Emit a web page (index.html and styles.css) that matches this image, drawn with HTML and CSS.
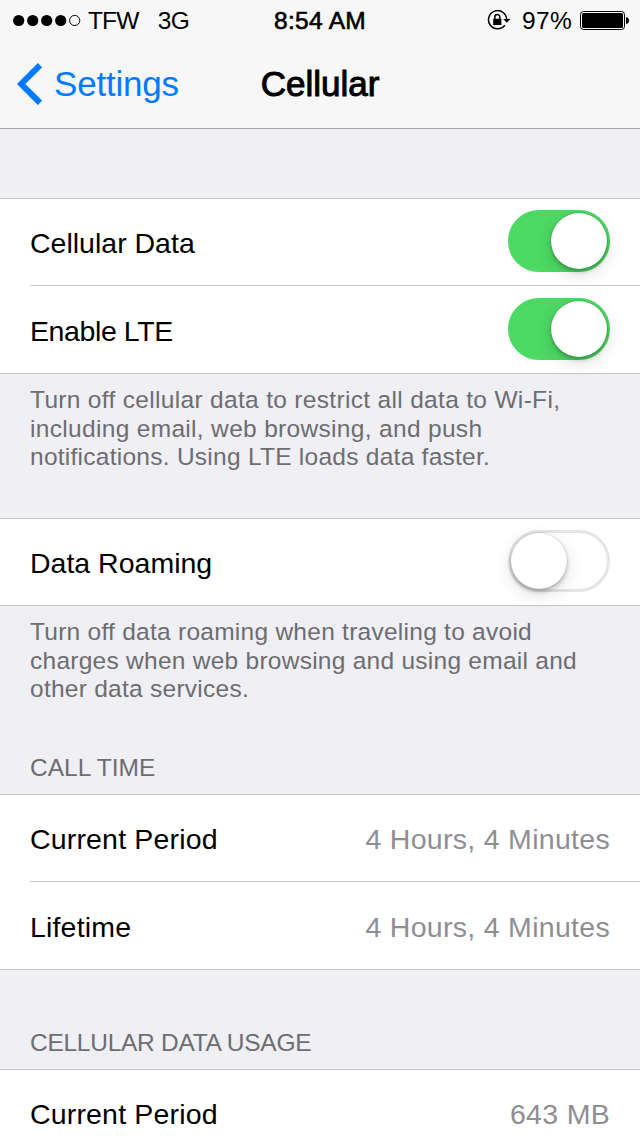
FILE: index.html
```html
<!DOCTYPE html>
<html lang="en">
<head>
<meta charset="utf-8">
<title>Cellular</title>
<link rel="stylesheet" href="styles.css">
</head>
<body>
<header class="top">
  <div class="status">
    <div class="status-left">
      <svg class="signal" width="68" height="14" viewBox="0 0 68 14"><circle cx="5.7" cy="7.5" r="5.6"/><circle cx="19.7" cy="7.5" r="5.6"/><circle cx="33.7" cy="7.5" r="5.6"/><circle cx="47.7" cy="7.5" r="5.6"/><circle cx="61.7" cy="7.5" r="5.1" fill="none" stroke="#000"/></svg>
      <span class="carrier">TFW</span><span class="network">3G</span>
    </div>
    <div class="time">8:54 AM</div>
    <div class="status-right">
      <svg class="lock" width="24" height="20" viewBox="0 0 24 20"><path d="M17.800 15.300A9.100 9.100 0 1 1 19.700 9.500" fill="none" stroke="#000" stroke-width="1.500"/><path d="M16.200 9H23.400L19.800 12.800Z"/><path d="M6.200 8.800h8.200v6.200H6.200z"/><path d="M7.800 9.500V7a2.500 2.500 0 0 1 5 0v2.500" fill="none" stroke="#000" stroke-width="1.500"/></svg>
      <span class="percent">97%</span>
      <svg class="battery" width="49" height="20" viewBox="0 0 49 20"><rect x=".5" y="1.500" width="44" height="18" rx="3" fill="none" stroke="#000"/><rect x="2" y="3" width="41" height="15" rx="1.500"/><path d="M46 7c2 .3 3 1.500 3 3.500s-1 3.200-3 3.500z"/></svg>
    </div>
  </div>
  <nav class="nav">
    <a class="back"><svg width="26" height="42" viewBox="0 0 26 42"><path d="M24 2.200 5.200 21 24 39.800" fill="none" stroke="#007aff" stroke-width="6"/></svg><span>Settings</span></a>
    <h1 class="title">Cellular</h1>
  </nav>
</header>
<main>
  <section class="group first">
    <div class="row"><span class="label l-data">Cellular Data</span><span class="switch on"><i></i></span></div>
    <div class="row"><span class="label l-lte">Enable LTE</span><span class="switch on"><i></i></span></div>
  </section>
  <p class="note note-data"><span class="wide">Turn off cellular data to restrict all data to Wi-Fi,</span><span class="wide">including email, web browsing, and push</span><span>notifications. Using LTE loads data faster.</span></p>
  <section class="group single">
    <div class="row"><span class="label">Data Roaming</span><span class="switch"><i></i></span></div>
  </section>
  <p class="note note-roam"><span>Turn off data roaming when traveling to avoid</span><span>charges when web browsing and using email and</span><span>other data services.</span></p>
  <h2 class="heading h-call">CALL TIME</h2>
  <section class="group">
    <div class="row"><span class="label l-period">Current Period</span><span class="value">4 Hours, 4 Minutes</span></div>
    <div class="row"><span class="label l-period">Lifetime</span><span class="value">4 Hours, 4 Minutes</span></div>
  </section>
  <h2 class="heading h-usage">CELLULAR DATA USAGE</h2>
  <section class="group">
    <div class="row"><span class="label l-period">Current Period</span><span class="value">643 MB</span></div>
  </section>
</main>
</body>
</html>
```
FILE: styles.css
```css
* { box-sizing: border-box; margin: 0; padding: 0; }
body { width: 640px; height: 1136px; overflow: hidden; background: #efeff4; color: #000; font-family: "Liberation Sans", Arial, sans-serif; font-size: 28.5px; }
svg { display: block; flex: none; }
span, .time, .title { white-space: nowrap; }
.top { height: 129px; background: #f7f7f7; border-bottom: 1px solid #a7a7ab; }
.status { height: 40px; display: grid; grid-template-columns: 1fr auto 1fr; align-items: center; font-size: 24.5px; line-height: 40px; padding: 0 11px 0 13px; }
.status-left, .status-right { display: flex; align-items: center; }
.status-right { justify-content: flex-end; }
.carrier, .network, .time, .percent { padding-top: 2px; line-height: 38px; }
.carrier { margin-left: 7px; letter-spacing: -.9px; }
.network { margin-left: 19.5px; letter-spacing: -.8px; }
.percent { margin: 0 8px 0 11px; letter-spacing: .3px; }
.time { -webkit-text-stroke: .6px #000; letter-spacing: .3px; padding-right: 2px; }
.nav { height: 88px; display: grid; grid-template-columns: 1fr auto 1fr; align-items: center; padding: 0 16px; }
.back { display: flex; align-items: center; gap: 12px; color: #007aff; font-size: 35px; }
.back span { letter-spacing: -.2px; }
.title { font-size: 35px; font-weight: 400; -webkit-text-stroke: 1px #000; }
.group { background: #fff; border-top: 1px solid #c8c7cc; border-bottom: 1px solid #c8c7cc; }
.first { margin-top: 69px; }
.row { margin-left: 30px; padding: 3px 30px 0 0; display: flex; align-items: center; justify-content: space-between; }
.row:first-child { height: 86px; }
.row + .row { height: 88px; border-top: 1px solid #c8c7cc; }
.l-lte { letter-spacing: -.4px; }
.l-period { letter-spacing: .17px; }
.value { color: #8e8e93; letter-spacing: .3px; }
.switch { width: 102px; height: 62px; border-radius: 31px; border: 3px solid #e5e5e5; display: flex; margin-top: -5px; }
.switch i { width: 56px; height: 56px; border-radius: 50%; background: #fff; box-shadow: 0 6px 18px rgba(0,0,0,.13), 0 3px 4px rgba(0,0,0,.2), 0 0 2px rgba(0,0,0,.25); }
.switch.on { background: #4cd964; border-color: #4cd964; justify-content: flex-end; }
.note { padding: 12px 30px 0; color: #6d6d72; font-size: 24.5px; line-height: 28.7px; letter-spacing: .26px; }
.note span { display: block; }
.note .wide { letter-spacing: .32px; }
.note-data { height: 144px; }
.note-roam { height: 112px; }
.heading { padding-left: 30px; font-size: 24.5px; font-weight: 400; color: #6d6d72; line-height: 28px; }
.h-call { height: 76px; padding-top: 36px; }
.h-usage { height: 99px; padding-top: 59px; letter-spacing: -.27px; }
```
